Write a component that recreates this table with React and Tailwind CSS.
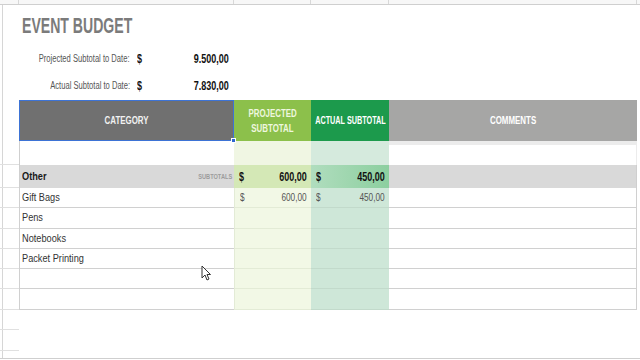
import React from "react";

// little helper: the sheet font looks squeezed, so text is squashed on x
const Sq = ({ children, className }) => (
  <span className={`inline-block whitespace-nowrap ${className}`}>{children}</span>
);

const Gutter = ({ line = true }) => (
  <div className={`w-[19px] shrink-0 ${line ? "border-b border-[#e0e0e0]" : ""}`}>
    <div className="ml-[2px] h-full border-l border-[#d6d6d6]" />
  </div>
);

const items = [
  { name: "Gift Bags", proj: "600,00", act: "450,00", h: "h-[20px]" },
  { name: "Pens", h: "h-[21px]" },
  { name: "Notebooks", h: "h-[20px]" },
  { name: "Packet Printing", h: "h-[20px]" },
  { name: "", h: "h-[20px]" },
  { name: "", h: "h-[21px]" },
];

const Money = ({ value, bold }) => (
  <div className="flex h-full items-center justify-between pl-[5px] pr-[4px]">
    {value && (
      <>
        <Sq className={`scale-x-[0.75] origin-left ${bold ? "font-bold text-[12px] text-[#111]" : "text-[11px] text-[#555]"}`}>$</Sq>
        <Sq className={`scale-x-[0.75] origin-right ${bold ? "font-bold text-[12px] text-[#111]" : "text-[11px] text-[#555]"}`}>{value}</Sq>
      </>
    )}
  </div>
);

export default function App() {
  return (
    <div className="relative w-[640px] h-[360px] overflow-hidden bg-white font-['Liberation_Sans',Arial,sans-serif] leading-none">
      {/* spreadsheet strip on top */}
      <div className="flex h-[5px] border-b border-[#cfcfcf] bg-[#f7f7f7]">
        <div className="w-[19px] border-r border-[#d8d8d8]" />
        <div className="w-[215px] border-r border-[#d8d8d8]" />
        <div className="w-[77px] border-r border-[#d8d8d8]" />
        <div className="w-[78px] border-r border-[#d8d8d8]" />
        <div className="w-[248px] border-r border-[#d8d8d8]" />
      </div>

      {/* title */}
      <div className="flex h-[40px]">
        <Gutter line={false} />
        <div className="flex items-end pb-[8px] pl-[3px]">
          <Sq className="scale-x-[0.64] origin-left text-[22px] font-bold text-[#7b7b7b]">EVENT BUDGET</Sq>
        </div>
      </div>

      {/* totals to date */}
      {[
        ["Projected Subtotal to Date:", "9.500,00", "h-[27px]"],
        ["Actual Subtotal to Date:", "7.830,00", "h-[28px]"],
      ].map(([label, val, h]) => (
        <div key={label} className={`flex ${h}`}>
          <Gutter line={false} />
          <div className="flex w-[111px] items-center justify-end">
            <Sq className="scale-x-[0.76] origin-right text-[10px] text-[#555]">{label}</Sq>
          </div>
          <div className="flex w-[99px] items-center justify-between pl-[7px]">
            <Sq className="scale-x-[0.75] origin-left text-[12px] font-bold text-[#111]">$</Sq>
            <Sq className="scale-x-[0.75] origin-right text-[12px] font-bold text-[#111]">{val}</Sq>
          </div>
        </div>
      ))}

      {/* header */}
      <div className="flex h-[41px]">
        <Gutter line={false} />
        <div className="relative flex w-[215px] items-center justify-center border border-[#3d73d5] bg-[#707070]">
          <Sq className="scale-x-[0.72] text-[11px] font-bold text-[#f2f2f2]">CATEGORY</Sq>
          <div className="absolute -bottom-[3px] -right-[3px] h-[5px] w-[5px] border border-white bg-[#2f66cf]" />
        </div>
        <div className="flex w-[77px] flex-col items-center justify-center gap-[4px] bg-[#8cc04b]">
          <Sq className="scale-x-[0.72] text-[11px] font-bold text-[#eef7df]">PROJECTED</Sq>
          <Sq className="scale-x-[0.72] text-[11px] font-bold text-[#eef7df]">SUBTOTAL</Sq>
        </div>
        <div className="flex w-[78px] items-center justify-center bg-[#1c9a4c]">
          <Sq className="scale-x-[0.66] text-[11px] font-bold text-white">ACTUAL SUBTOTAL</Sq>
        </div>
        <div className="flex w-[248px] items-center justify-center bg-[#a6a6a5]">
          <Sq className="scale-x-[0.72] text-[11px] font-bold text-white">COMMENTS</Sq>
        </div>
      </div>

      {/* blank row under header */}
      <div className="flex h-[24px]">
        <Gutter />
        <div className="w-[215px] border-l border-[#cfcfcf] bg-white" />
        <div className="w-[77px] bg-[#f0f6e3]" />
        <div className="w-[78px] bg-[#d5eadd]" />
        <div className="w-[248px] border-r border-t-[4px] border-[#ececec] bg-white" />
      </div>

      {/* subtotal row */}
      <div className="flex h-[23px]">
        <Gutter />
        <div className="flex w-[215px] items-center justify-between border-l border-[#cfcfcf] bg-[#d9d9d9] pl-[2px] pr-[2px]">
          <Sq className="scale-x-[0.8] origin-left text-[11.5px] font-bold text-[#1a1a1a]">Other</Sq>
          <Sq className="scale-x-[0.75] origin-right text-[7.5px] font-bold text-[#9c9c9c]">SUBTOTALS</Sq>
        </div>
        <div className="w-[77px] bg-[#d4e8b6]">
          <Money value="600,00" bold />
        </div>
        <div className="w-[78px] bg-gradient-to-r from-[#b0ddbe] to-[#8ccf9f]">
          <Money value="450,00" bold />
        </div>
        <div className="w-[248px] border-r border-[#cfcfcf] bg-[#d9d9d9]" />
      </div>

      {/* item rows */}
      {items.map((it, i) => (
        <div key={i} className={`flex ${it.h}`}>
          <Gutter />
          <div className="flex w-[215px] items-center border-b border-l border-[#d0d0d0] pl-[2px]">
            <Sq className="scale-x-[0.8] origin-left text-[11.5px] text-[#333]">{it.name}</Sq>
          </div>
          <div className="w-[77px] border-b border-l border-[#e3ebd6] bg-[#f2f8e6]">
            <Money value={it.proj} />
          </div>
          <div className="w-[78px] border-b border-[#c2dacb] bg-[#cee7d8]">
            <Money value={it.act} />
          </div>
          <div className="w-[248px] border-b border-r border-[#d0d0d0]" />
        </div>
      ))}

      {/* empty sheet below */}
      {["h-[20px]", "h-[21px]", "h-[7px]"].map((h, i) => (
        <div key={i} className={`flex ${h}`}>
          <Gutter line={i < 2} />
        </div>
      ))}
      <div className="h-px border-b border-[#cfcfcf]" />

      {/* mouse pointer */}
      <svg className="absolute left-[201px] top-[265px]" width="10" height="17" viewBox="0 0 10 17">
        <path d="M1 1 L1 13 L4 10 L6 15 L8 14 L6 9.5 L9.5 9.5 Z" fill="#fff" stroke="#333" strokeWidth="1" strokeLinejoin="round" />
      </svg>
    </div>
  );
}
